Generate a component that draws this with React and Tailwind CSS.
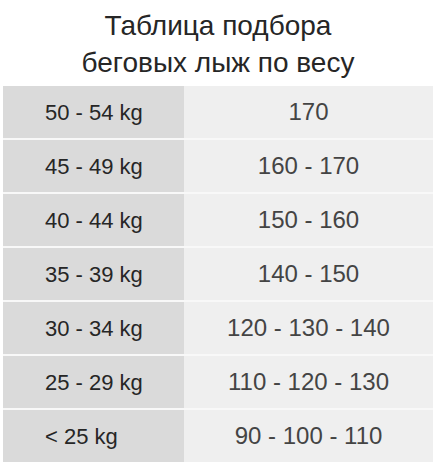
import React from "react";

const ROWS = [
  ["50 - 54 kg", "170"],
  ["45 - 49 kg", "160 - 170"],
  ["40 - 44 kg", "150 - 160"],
  ["35 - 39 kg", "140 - 150"],
  ["30 - 34 kg", "120 - 130 - 140"],
  ["25 - 29 kg", "110 - 120 - 130"],
  ["< 25 kg", "90 - 100 - 110"],
];

export default function App() {
  return (
    <div
      className="w-[436px] h-[470px] bg-white overflow-hidden"
      style={{ fontFamily: '"Liberation Sans", Arial, sans-serif' }}
    >
      <div className="pt-[7px] text-center text-[28px] leading-[37px] text-[#262626]">
        <div>Таблица подбора</div>
        <div>беговых лыж по весу</div>
      </div>

      <div className="mt-[5px] ml-[3px] w-[430px] flex flex-col gap-[2px] bg-[#f8f8f8]">
        {ROWS.map(([weight, length]) => (
          <div key={weight} className="flex h-[52px]">
            <div className="w-[181px] bg-[#dadada] flex items-center pl-[42px] text-[22px] text-[#262626]">
              {weight}
            </div>
            <div className="flex-1 bg-[#efefef] flex items-center justify-center text-[24px] text-[#444]">
              {length}
            </div>
          </div>
        ))}
      </div>
    </div>
  );
}
